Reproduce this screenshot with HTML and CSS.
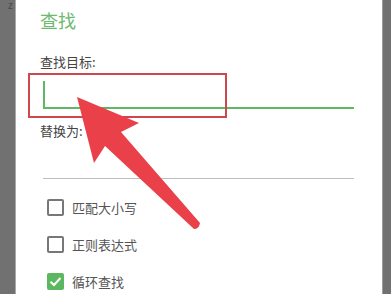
FILE: index.html
```html
<!DOCTYPE html>
<html lang="zh-CN">
<head>
    <meta charset="UTF-8">
    <meta name="viewport" content="width=device-width, initial-scale=1.0">
    <title>查找</title>
    <link rel="stylesheet" href="styles.css">
</head>
<body>
    <div class="screen">
        <div class="shade shade-left"><span class="shade-text">z</span></div>

        <div class="dialog">
            <h1 class="dialog-title">查找</h1>

            <div class="field-label first">查找目标:</div>
            <div class="field active">
                <div class="cursor"></div>
            </div>

            <div class="field-label">替换为:</div>
            <div class="field"></div>

            <div class="options">
                <label class="option">
                    <span class="box"></span>
                    <span>匹配大小写</span>
                </label>
                <label class="option">
                    <span class="box"></span>
                    <span>正则表达式</span>
                </label>
                <label class="option">
                    <span class="box checked">
                        <svg viewBox="0 0 17 17" width="17" height="17">
                            <path d="M3.5 8.8 L7 12 L13.5 5" fill="none" stroke="#fff" stroke-width="2"/>
                        </svg>
                    </span>
                    <span>循环查找</span>
                </label>
            </div>
        </div>

        <div class="shade shade-right"></div>

        <!-- 标注：红框和箭头 -->
        <div class="mark-box"></div>
        <svg class="mark-arrow" viewBox="0 0 391 294" width="391" height="294">
            <path d="M77 97 L139 123 L121 132 L200 223 Q199 229 194 229 L105 146 L94 163 Z" fill="#e9404a"/>
        </svg>
    </div>
</body>
</html>
```

FILE: styles.css
```css
body {
    margin: 0;
    font-family: "Noto Sans CJK SC", "Noto Sans", sans-serif;
    background: #fff;
}

.screen {
    position: relative;
    display: flex;
    width: 391px;
    height: 294px;
    overflow: hidden;
}

.shade {
    background: #717171;
}

.shade-left {
    width: 15px;
    border-right: 1px solid #a9a9a9;
}

.shade-right {
    width: 8px;
    border-left: 1px solid #9c9c9c;
}

.shade-text {
    display: block;
    margin: 0 0 0 8px;
    font-size: 10px;
    line-height: 10px;
    color: #4a4a4a;
}

.dialog {
    flex: 1;
    padding: 0 28px 0 24px;
}

.dialog-title {
    margin: 0;
    padding-top: 10px;
    font-size: 18px;
    line-height: 20px;
    font-weight: normal;
    color: #6cba6f;
}

.field-label {
    margin-top: 14px;
    font-size: 13px;
    line-height: 16px;
    color: #444;
}

.field-label.first {
    margin-top: 24px;
}

.field {
    margin-left: 3px;
    height: 39px;
    border-bottom: 1px solid #bdbdbd;
}

.field.active {
    box-sizing: border-box;
    height: 39px;
    padding-top: 11px;
    border-bottom: 2px solid #5fb962;
}

.cursor {
    width: 2px;
    height: 26px;
    background: #5fb962;
}

.options {
    margin-top: 10px;
}

.option {
    display: flex;
    align-items: center;
    gap: 8px;
    height: 37px;
    padding-left: 7px;
    font-size: 13px;
    color: #555;
}

.box {
    display: block;
    width: 13px;
    height: 13px;
    border: 2px solid #777;
    border-radius: 2px;
}

.box.checked {
    width: 17px;
    height: 17px;
    border: none;
    background: #5cb860;
}

.box svg {
    display: block;
}

.mark-box {
    position: absolute;
    left: 28px;
    top: 73px;
    width: 195px;
    height: 41px;
    border: 2px solid #cd484d;
}

.mark-arrow {
    position: absolute;
    left: 0;
    top: 0;
}
```
